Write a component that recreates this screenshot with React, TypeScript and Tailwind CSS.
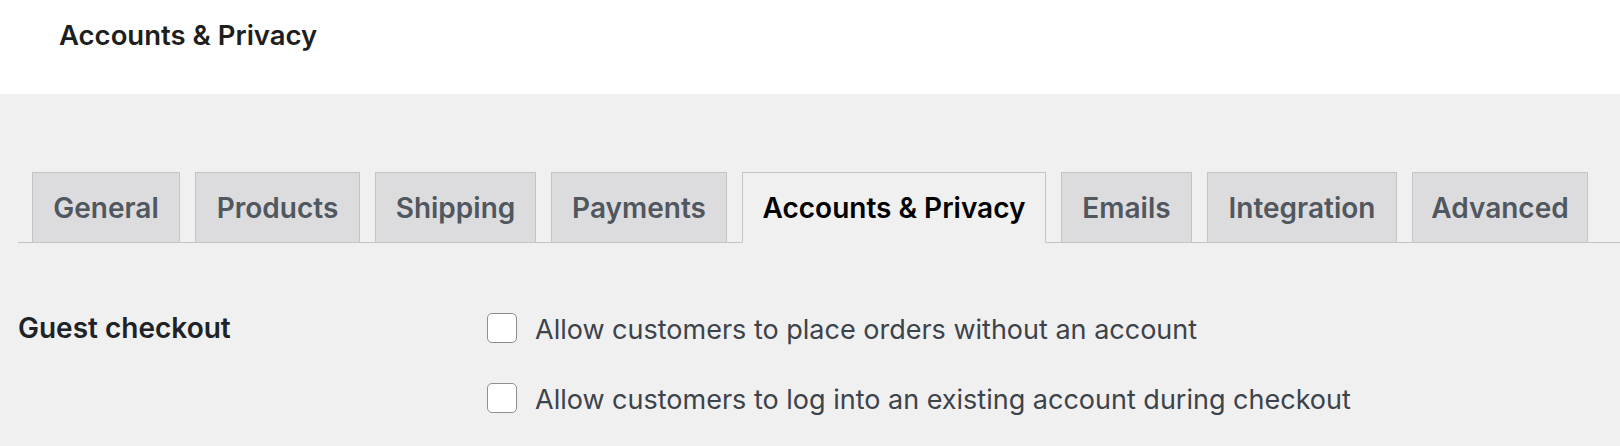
import React from "react"

const tabs = [
  { label: "General", width: "w-[148px]" },
  { label: "Products", width: "w-[165px]" },
  { label: "Shipping", width: "w-[161px]" },
  { label: "Payments", width: "w-[176px]" },
  { label: "Accounts & Privacy", width: "w-[304px]", active: true },
  { label: "Emails", width: "w-[131px]" },
  { label: "Integration", width: "w-[190px]" },
  { label: "Advanced", width: "w-[176px]" },
]

const options = [
  "Allow customers to place orders without an account",
  "Allow customers to log into an existing account during checkout",
]

function Checkbox() {
  return <span className="block w-[30px] h-[30px] shrink-0 rounded-[5px] border-[1.5px] border-[#8c8f94] bg-white" />
}

export default function App() {
  return (
    <div className="w-[1620px] h-[446px] overflow-hidden bg-[#f0f0f1] font-['Inter','Liberation_Sans',sans-serif]">
      {/* Cabecera */}
      <header className="h-[94px] bg-white pl-[59px] pt-[18px]">
        <h1 className="text-[27.5px] leading-[34px] font-semibold text-[#1e1e1e]">Accounts &amp; Privacy</h1>
      </header>

      {/* Pestañas */}
      <nav className="mt-[78px] ml-[18px] flex border-b-[1.5px] border-[#c3c4c7]">
        {tabs.map((tab) => (
          <div
            key={tab.label}
            className={
              tab.active
                ? `${tab.width} ml-[15px] first:ml-[14px] -mb-[1.5px] h-[71px] flex items-center justify-center border-[1.5px] border-[#c3c4c7] border-b-[#f0f0f1] bg-[#f0f0f1] text-[28px] font-semibold text-black`
                : `${tab.width} ml-[15px] first:ml-[14px] -mb-[1.5px] h-[71px] flex items-center justify-center border-[1.5px] border-[#c3c4c7] bg-[#dcdcde] text-[28px] font-semibold text-[#50575e]`
            }
          >
            {tab.label}
          </div>
        ))}
      </nav>

      {/* Formulario */}
      <div className="grid grid-cols-[469px_1fr] pl-[18px] pt-[70px]">
        <div className="h-[30px] flex items-center text-[28px] font-semibold text-[#1d2327]">Guest checkout</div>
        <div className="flex flex-col gap-[40px]">
          {options.map((opt) => (
            <label key={opt} className="h-[30px] flex items-center gap-[18px]">
              <Checkbox />
              <span className="text-[27px] leading-[30px] text-[#3c434a] pt-[4px]">{opt}</span>
            </label>
          ))}
        </div>
      </div>
    </div>
  )
}
